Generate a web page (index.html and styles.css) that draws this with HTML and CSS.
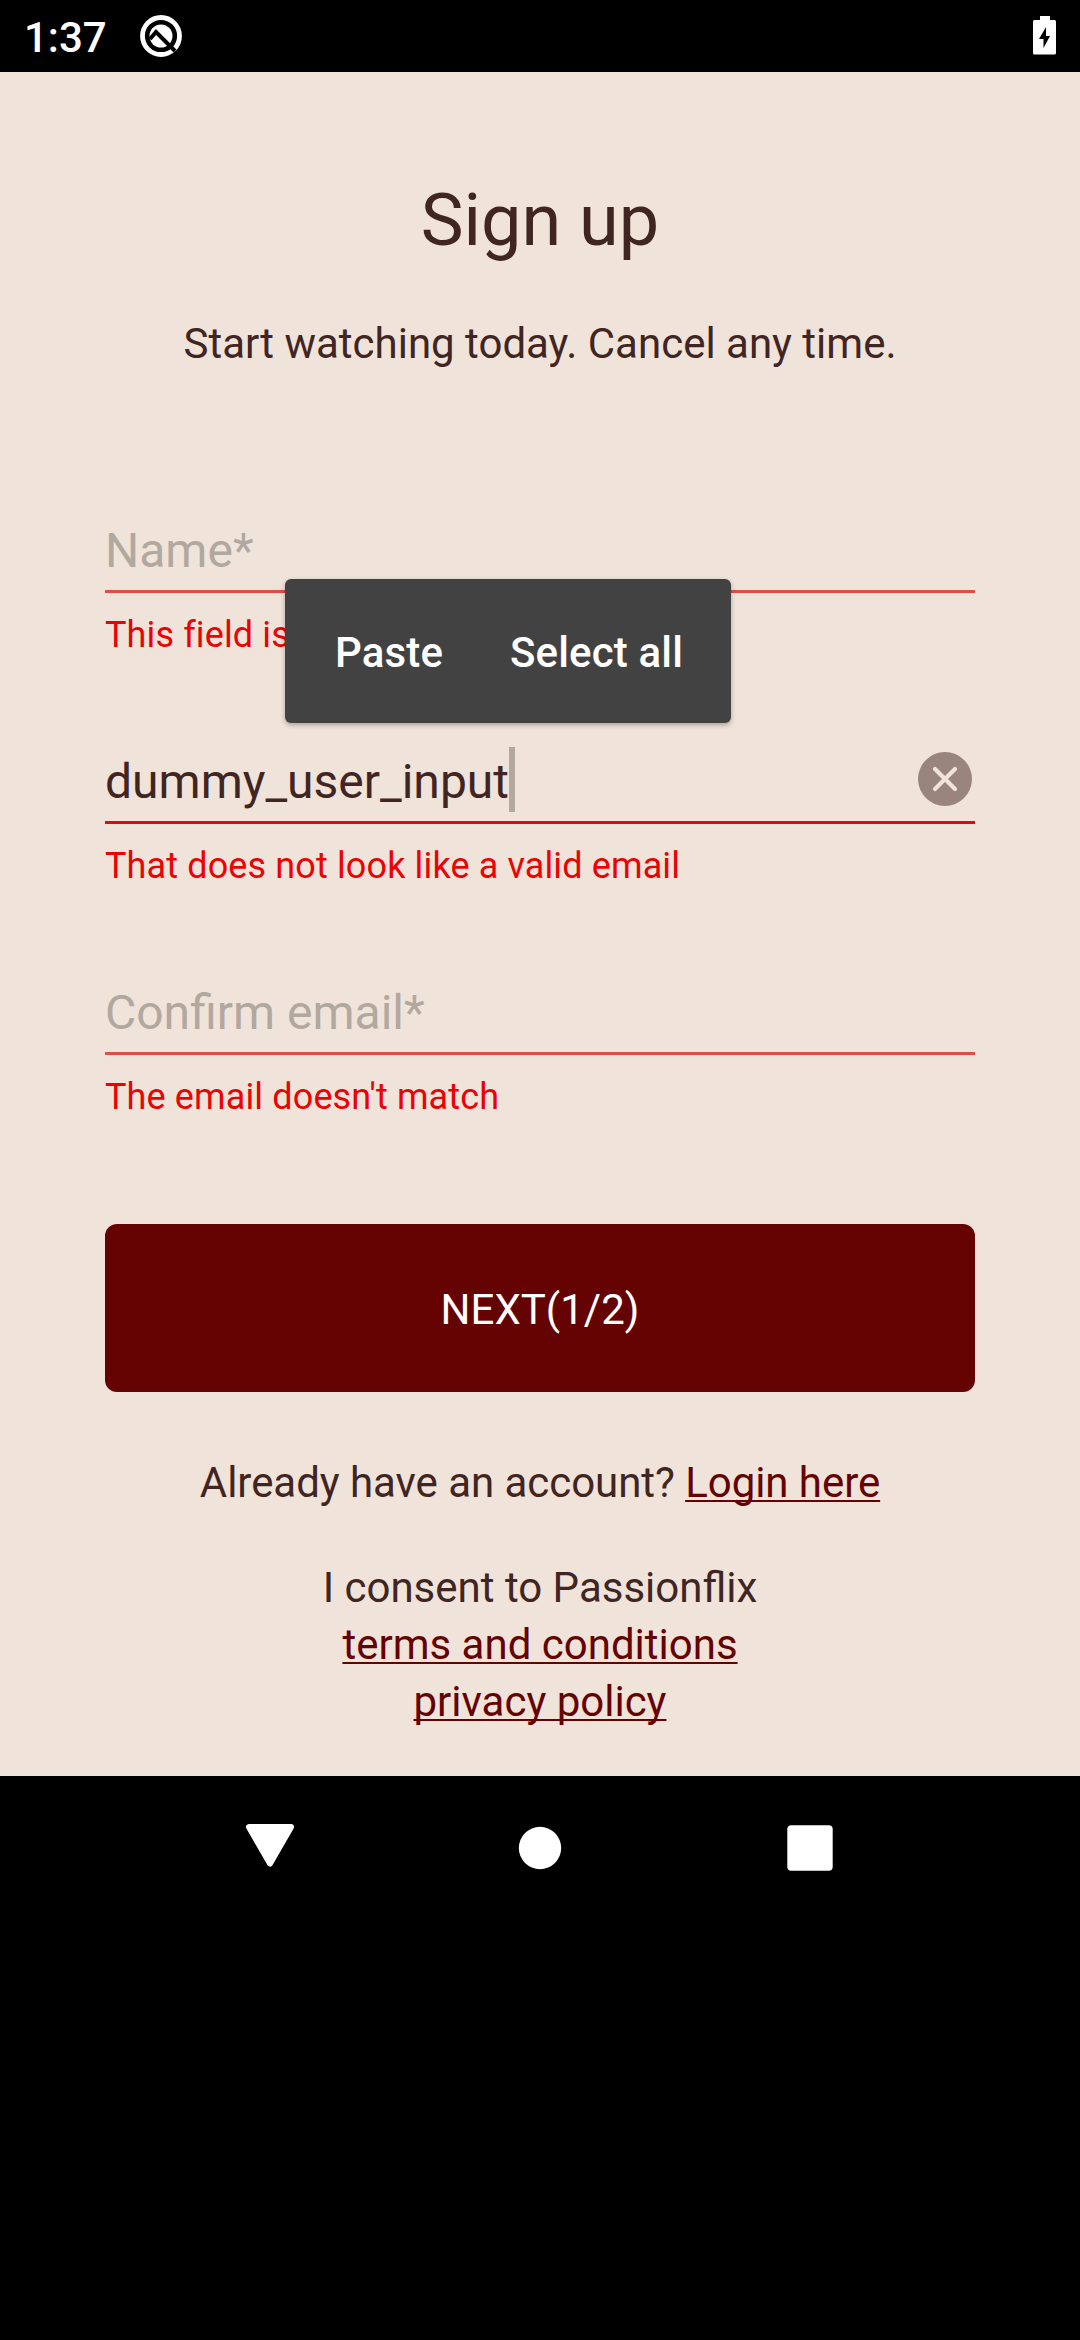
FILE: index.html
```html
<!DOCTYPE html>
<html lang="en">
<head>
<meta charset="utf-8">
<title>Sign up</title>
<link rel="stylesheet" href="styles.css">
</head>
<body>
<header class="status">
  <span class="time">1:37</span>
  <svg class="q-icon" width="44" height="44" viewBox="0 0 44 44">
    <circle cx="22" cy="22" r="18.500" fill="none" stroke="#fff" stroke-width="4.800"/>
    <circle cx="22" cy="22" r="11.500" fill="#fff"/>
    <path d="M11 25L17 18L36 37" fill="none" stroke="#000" stroke-width="4"/>
  </svg>
  <svg class="battery" width="23" height="39" viewBox="0 0 23 39">
    <path d="M7 0h10v4h4.500q1.500 0 1.500 1.500v31.500q0 1.500-1.500 1.500h-20q-1.500 0-1.500-1.500v-31.500q0-1.500 1.500-1.500h5.500z" fill="#fff"/>
    <path d="M13 11L6 23h4.500v9L17 20h-4z" fill="#000"/>
  </svg>
</header>
<main class="page">
  <h1 class="title">Sign up</h1>
  <p class="subtitle">Start watching today. Cancel any time.</p>
  <form class="form">
    <div class="field">
      <div class="control"><span class="hint">Name*</span></div>
      <p class="error">This field is required</p>
      <div class="menu"><span>Paste</span><span>Select all</span></div>
    </div>
    <div class="field">
      <div class="control focused">
        <span class="value">dummy_user_input<i class="caret"></i></span>
        <svg class="clear" width="54" height="54" viewBox="0 0 54 54">
          <circle cx="27" cy="27" r="27" fill="#9a847e"/>
          <path d="M17 17L37 37M37 17L17 37" stroke="#f0e3da" stroke-width="4.200" stroke-linecap="round"/>
        </svg>
      </div>
      <p class="error">That does not look like a valid email</p>
    </div>
    <div class="field">
      <div class="control"><span class="hint">Confirm email*</span></div>
      <p class="error">The email doesn't match</p>
    </div>
    <button class="next" type="button">NEXT(1/2)</button>
  </form>
  <p class="login">Already have an account? <a class="link">Login here</a></p>
  <p class="consent">I consent to Passionflix<br><a class="link">terms and conditions</a><br><a class="link">privacy policy</a></p>
</main>
<nav class="nav">
  <svg width="50" height="48" viewBox="0 0 50 48"><path d="M4 3H46L25 39.500z" fill="#fff" stroke="#fff" stroke-width="6" stroke-linejoin="round"/></svg>
  <svg width="50" height="48" viewBox="0 0 50 48"><circle cx="25" cy="24" r="21.200" fill="#fff"/></svg>
  <svg width="50" height="48" viewBox="0 0 50 48"><rect x="2.300" y="1.300" width="45.400" height="45.400" rx="4" fill="#fff"/></svg>
</nav>
</body>
</html>
```
FILE: styles.css
```css
* { box-sizing: border-box; margin: 0; padding: 0; }
body {
  width: 1080px;
  min-height: 2340px;
  background: #000;
  color: #412522;
  font: 400 42px/49px Roboto, sans-serif;
}
.status {
  display: flex;
  align-items: flex-start;
  height: 72px;
  padding: 13px 24px 0;
  color: #fff;
}
.time { font-weight: 500; }
.q-icon { margin: 1px 0 0 32px; }
.battery { margin: 3px 0 0 auto; }
.page {
  height: 1704px;
  padding: 106px 105px 0;
  background: #f0e3da;
}
.title {
  font-size: 72px;
  line-height: 85px;
  font-weight: 400;
  text-align: center;
}
.subtitle { margin-top: 56px; text-align: center; }
.form { margin-top: 154px; }
.field { position: relative; height: 231px; }
.control {
  display: flex;
  justify-content: space-between;
  height: 71px;
  padding-bottom: 11px;
  border-bottom: 3px solid #e04c48;
  font-size: 48px;
  line-height: 57px;
}
.focused { border-color: #e60808; }
.hint { color: #b1a8a0; }
.value { position: relative; }
.caret {
  position: absolute;
  left: 100%;
  top: -6px;
  width: 6px;
  height: 65px;
  background: #b1a8a0;
}
.clear { margin: -1px 3px 0 0; }
.error {
  margin-top: 21px;
  color: #eb0202;
  font-size: 36px;
  line-height: 42px;
  letter-spacing: .13px;
  font-variant-ligatures: common-ligatures;
}
.menu {
  position: absolute;
  left: 180px;
  top: 57px;
  z-index: 1;
  display: flex;
  justify-content: space-between;
  width: 446px;
  height: 144px;
  padding: 49px 48px 0 50px;
  border-radius: 6px;
  background: #424242;
  box-shadow: 0 2px 5px rgba(0, 0, 0, .3);
  color: #fff;
  font-weight: 500;
  letter-spacing: .15px;
}
.next {
  display: block;
  width: 100%;
  height: 168px;
  margin-top: 9px;
  padding: 3px 0 0;
  border: 0;
  border-radius: 12px;
  background: #650202;
  color: #fff;
  font: inherit;
}
.login { margin-top: 66px; text-align: center; letter-spacing: -.05px; }
.consent { margin-top: 52px; line-height: 57px; text-align: center; }
.link {
  color: #650202;
  text-decoration: underline 2px;
  text-underline-offset: 3px;
  text-decoration-skip-ink: none;
}
.nav {
  display: flex;
  justify-content: center;
  gap: 220px;
  padding-top: 48px;
}
```
